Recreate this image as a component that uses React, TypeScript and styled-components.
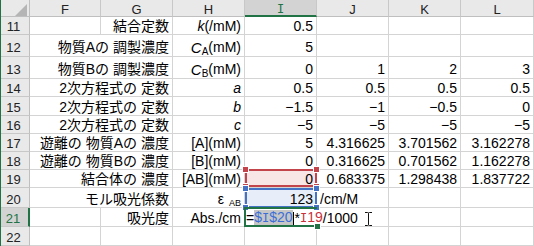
import { Fragment } from "react";
import type { ReactNode } from "react";
import styled, { createGlobalStyle } from "styled-components";

const GlobalStyle = createGlobalStyle`
  html, body {
    margin: 0;
    padding: 0;
    background: #ffffff;
  }
  body {
    font-family: "Liberation Sans", "Noto Sans CJK JP", sans-serif;
    font-size: 14px;
    color: #000;
  }
`;

const green = "#217346";
const gridLine = "#d4d4d4";
const headLine = "#bfbfbf";
const redRef = "#c4444b";
const blueRef = "#4472c4";

const columns = ["F", "G", "H", "I", "J", "K", "L"];

type SheetRow = {
    n: number;
    label?: string;
    spanLabel?: boolean;
    unit?: ReactNode;
    values: string[];
    pad?: number;
};

const Var = styled.i<{ $size?: number }>`
    font-style: italic;
    font-size: ${(p) => p.$size ?? 14}px;
`;

const Sub = styled.span<{ $size: number; $drop: number; $gap?: number }>`
    position: relative;
    top: ${(p) => p.$drop}px;
    margin-left: ${(p) => p.$gap ?? 0}px;
    font-size: ${(p) => p.$size}px;
`;

const Minus = styled.span`
    font-family: "Liberation Sans", sans-serif;
`;

const SerifI = styled.span`
    font-family: "DejaVu Sans Mono", monospace;
    font-size: 12px;
`;

const num = (v: string) =>
    v.startsWith("-") ? (
        <>
            <Minus>−</Minus>
            {v.slice(1)}
        </>
    ) : (
        v
    );

const rows: SheetRow[] = [
    { n: 11, label: "結合定数", unit: <><Var>k</Var>(/mM)</>, values: ["0.5", "", "", ""] },
    {
        n: 12,
        label: "物質Aの 調製濃度",
        spanLabel: true,
        pad: 1,
        unit: <><Var $size={15}>C</Var><Sub $size={10} $drop={4}>A</Sub>(mM)</>,
        values: ["5", "", "", ""],
    },
    {
        n: 13,
        label: "物質Bの 調製濃度",
        spanLabel: true,
        pad: 1,
        unit: <><Var $size={15}>C</Var><Sub $size={10} $drop={4}>B</Sub>(mM)</>,
        values: ["0", "1", "2", "3"],
    },
    { n: 14, label: "2次方程式の 定数", spanLabel: true, unit: <Var>a</Var>, values: ["0.5", "0.5", "0.5", "0.5"] },
    { n: 15, label: "2次方程式の 定数", spanLabel: true, unit: <Var>b</Var>, values: ["-1.5", "-1", "-0.5", "0"] },
    { n: 16, label: "2次方程式の 定数", spanLabel: true, unit: <Var>c</Var>, values: ["-5", "-5", "-5", "-5"] },
    { n: 17, label: "遊離の 物質Aの 濃度", spanLabel: true, unit: "[A](mM)", values: ["5", "4.316625", "3.701562", "3.162278"] },
    { n: 18, label: "遊離の 物質Bの 濃度", spanLabel: true, unit: "[B](mM)", values: ["0", "0.316625", "0.701562", "1.162278"] },
    { n: 19, label: "結合体の 濃度", spanLabel: true, unit: "[AB](mM)", values: ["0", "0.683375", "1.298438", "1.837722"] },
    {
        n: 20,
        label: "モル吸光係数",
        spanLabel: true,
        unit: <>ε<Sub $size={9} $drop={4} $gap={5}>AB</Sub></>,
        values: ["123", "/cm/M", "", ""],
    },
    { n: 21, label: "吸光度", unit: "Abs./cm", values: ["", "", "", ""] },
    { n: 22, values: ["", "", "", ""] },
];

export default function App() {
    return (
        <>
            <GlobalStyle />
            <Sheet>
                <Corner>
                    <CornerMark />
                </Corner>
                {columns.map((c) => (
                    <ColHeader key={c} $active={c === "I"}>
                        {c === "I" ? <SerifI>I</SerifI> : c}
                    </ColHeader>
                ))}

                {rows.map((row) => (
                    <Fragment key={row.n}>
                        <RowHeader $active={row.n === 21} $pad={row.pad}>
                            {row.n}
                        </RowHeader>
                        {row.spanLabel ? (
                            <Cell $span={2} $pad={row.pad}>{row.label}</Cell>
                        ) : (
                            <>
                                <Cell />
                                <Cell $pad={row.pad}>{row.label}</Cell>
                            </>
                        )}
                        <Cell $pad={row.pad}>{row.unit}</Cell>

                        {row.n === 19 ? (
                            <Cell $bg="#f8e5e6">
                                <RefFrame $color={redRef} $top={-1} $bottom={0}>
                                    <Handle $color={redRef} $h="left" $v="top" />
                                    <Handle $color={redRef} $h="right" $v="top" />
                                    <Handle $color={redRef} $h="left" $v="bottom" />
                                    <Handle $color={redRef} $h="right" $v="bottom" />
                                </RefFrame>
                                {row.values[0]}
                            </Cell>
                        ) : row.n === 20 ? (
                            <Cell $bg="#e7eef9">
                                <RefFrame $color={blueRef} $top={0} $bottom={-1}>
                                    <Handle $color={blueRef} $h="left" $v="top" />
                                    <Handle $color={blueRef} $h="right" $v="top" />
                                    <Handle $color={blueRef} $h="left" $v="bottom" />
                                    <Handle $color={blueRef} $h="right" $v="bottom" />
                                </RefFrame>
                                {row.values[0]}
                            </Cell>
                        ) : row.n === 21 ? (
                            <EditCell $span={2}>
                                <ActiveFrame>
                                    <FillHandle />
                                </ActiveFrame>
                                =
                                <Selection>
                                    <RefText $color="#3b6fd6">
                                        $<SerifI>I</SerifI>$20
                                    </RefText>
                                </Selection>
                                <Caret />*
                                <RefText $color="#c9313a">
                                    <SerifI>I</SerifI>19
                                </RefText>
                                /1000
                                <IBeam width="7" height="14" viewBox="0 0 7 14">
                                    <path
                                        d="M0 0.5H2.5Q3.5 0.5 3.5 1.5V12.5Q3.5 13.5 2.5 13.5H0M7 0.5H4.5Q3.5 0.5 3.5 1.5M3.5 12.5Q3.5 13.5 4.5 13.5H7"
                                        fill="none"
                                        stroke="#111"
                                        strokeWidth="1"
                                    />
                                </IBeam>
                            </EditCell>
                        ) : (
                            <Cell $pad={row.pad}>{num(row.values[0])}</Cell>
                        )}

                        {row.n !== 21 &&
                            (row.n === 20 ? (
                                <Cell $align="left">/cm/M</Cell>
                            ) : (
                                <Cell $pad={row.pad}>{num(row.values[1])}</Cell>
                            ))}
                        <Cell $pad={row.pad}>{num(row.values[2])}</Cell>
                        <Cell $pad={row.pad}>{num(row.values[3])}</Cell>
                    </Fragment>
                ))}
            </Sheet>
        </>
    );
}

const Sheet = styled.div`
    display: grid;
    grid-template-columns: 29px 71px repeat(5, 72px) 73px;
    grid-template-rows: 17px 18px 22px 22px 18px 19px 18px 18px 18px 18px 20px 19px 19px;
    width: 534px;
    height: 246px;
    box-sizing: border-box;
    border-left: 1px solid ${green};
    overflow: hidden;
    background: #ffffff;
`;

const Corner = styled.div`
    display: flex;
    justify-content: flex-end;
    align-items: flex-end;
    padding: 0 2px 0 0;
    box-sizing: border-box;
    background: #e9e9e9;
    border-right: 1px solid ${headLine};
    border-bottom: 1px solid ${headLine};
`;

const CornerMark = styled.div`
    width: 12px;
    height: 12px;
    background: #b5b5b5;
    clip-path: polygon(100% 0, 100% 100%, 0 100%);
`;

const ColHeader = styled.div<{ $active?: boolean }>`
    display: flex;
    align-items: flex-end;
    justify-content: center;
    box-sizing: border-box;
    background: ${(p) => (p.$active ? "#d3d3d3" : "#e9e9e9")};
    color: ${(p) => (p.$active ? green : "#222")};
    border-right: 1px solid #c8c8c8;
    border-bottom: ${(p) => (p.$active ? `2px solid ${green}` : `1px solid ${headLine}`)};
    font-size: 13px;
    line-height: 12px;
`;

const RowHeader = styled.div<{ $active?: boolean; $pad?: number }>`
    display: flex;
    align-items: flex-end;
    justify-content: center;
    box-sizing: border-box;
    padding: 0 3px ${(p) => p.$pad ?? 0}px 0;
    background: ${(p) => (p.$active ? "#d3d3d3" : "#e9e9e9")};
    color: ${(p) => (p.$active ? green : "#222")};
    border-right: ${(p) => (p.$active ? `2px solid ${green}` : `1px solid ${headLine}`)};
    border-bottom: 1px solid #c8c8c8;
    font-size: 13px;
    line-height: 15px;
`;

const Cell = styled.div<{ $span?: number; $align?: "left" | "right"; $pad?: number; $bg?: string }>`
    grid-column: span ${(p) => p.$span ?? 1};
    position: relative;
    display: flex;
    align-items: flex-end;
    justify-content: ${(p) => (p.$align === "left" ? "flex-start" : "flex-end")};
    box-sizing: border-box;
    min-width: 0;
    padding: 0 3px ${(p) => p.$pad ?? 0}px;
    background: ${(p) => p.$bg ?? "#ffffff"};
    border-right: 1px solid ${gridLine};
    border-bottom: 1px solid ${gridLine};
    line-height: 15px;
    white-space: nowrap;
`;

const RefFrame = styled.div<{ $color: string; $top: number; $bottom: number }>`
    position: absolute;
    z-index: 2;
    top: ${(p) => p.$top}px;
    bottom: ${(p) => p.$bottom}px;
    left: 0;
    right: -1px;
    border: 2px solid ${(p) => p.$color};
    pointer-events: none;
`;

const Handle = styled.span<{ $color: string; $h: "left" | "right"; $v: "top" | "bottom" }>`
    position: absolute;
    ${(p) => p.$h}: -4px;
    ${(p) => p.$v}: -4px;
    width: 5px;
    height: 5px;
    background: ${(p) => p.$color};
    box-shadow: 0 0 0 1px #ffffff;
`;

const EditCell = styled(Cell)`
    justify-content: flex-start;
    padding-left: 1px;
`;

const ActiveFrame = styled.div`
    position: absolute;
    z-index: 3;
    top: -1px;
    left: -1px;
    bottom: -1px;
    width: 73px;
    box-sizing: border-box;
    border: 2px solid ${green};
    border-right: none;
    pointer-events: none;
`;

const FillHandle = styled.span`
    position: absolute;
    right: -3px;
    bottom: -4px;
    width: 5px;
    height: 5px;
    background: ${green};
    box-shadow: 0 0 0 1px #ffffff;
`;

const Selection = styled.span`
    background: #c6c6c6;
`;

const RefText = styled.span<{ $color: string }>`
    color: ${(p) => p.$color};
`;

const Caret = styled.span`
    display: inline-block;
    width: 1px;
    height: 14px;
    margin-right: 1px;
    background: #000;
    vertical-align: -3px;
`;

const IBeam = styled.svg`
    position: absolute;
    z-index: 4;
    left: 120px;
    top: 4px;
`;
